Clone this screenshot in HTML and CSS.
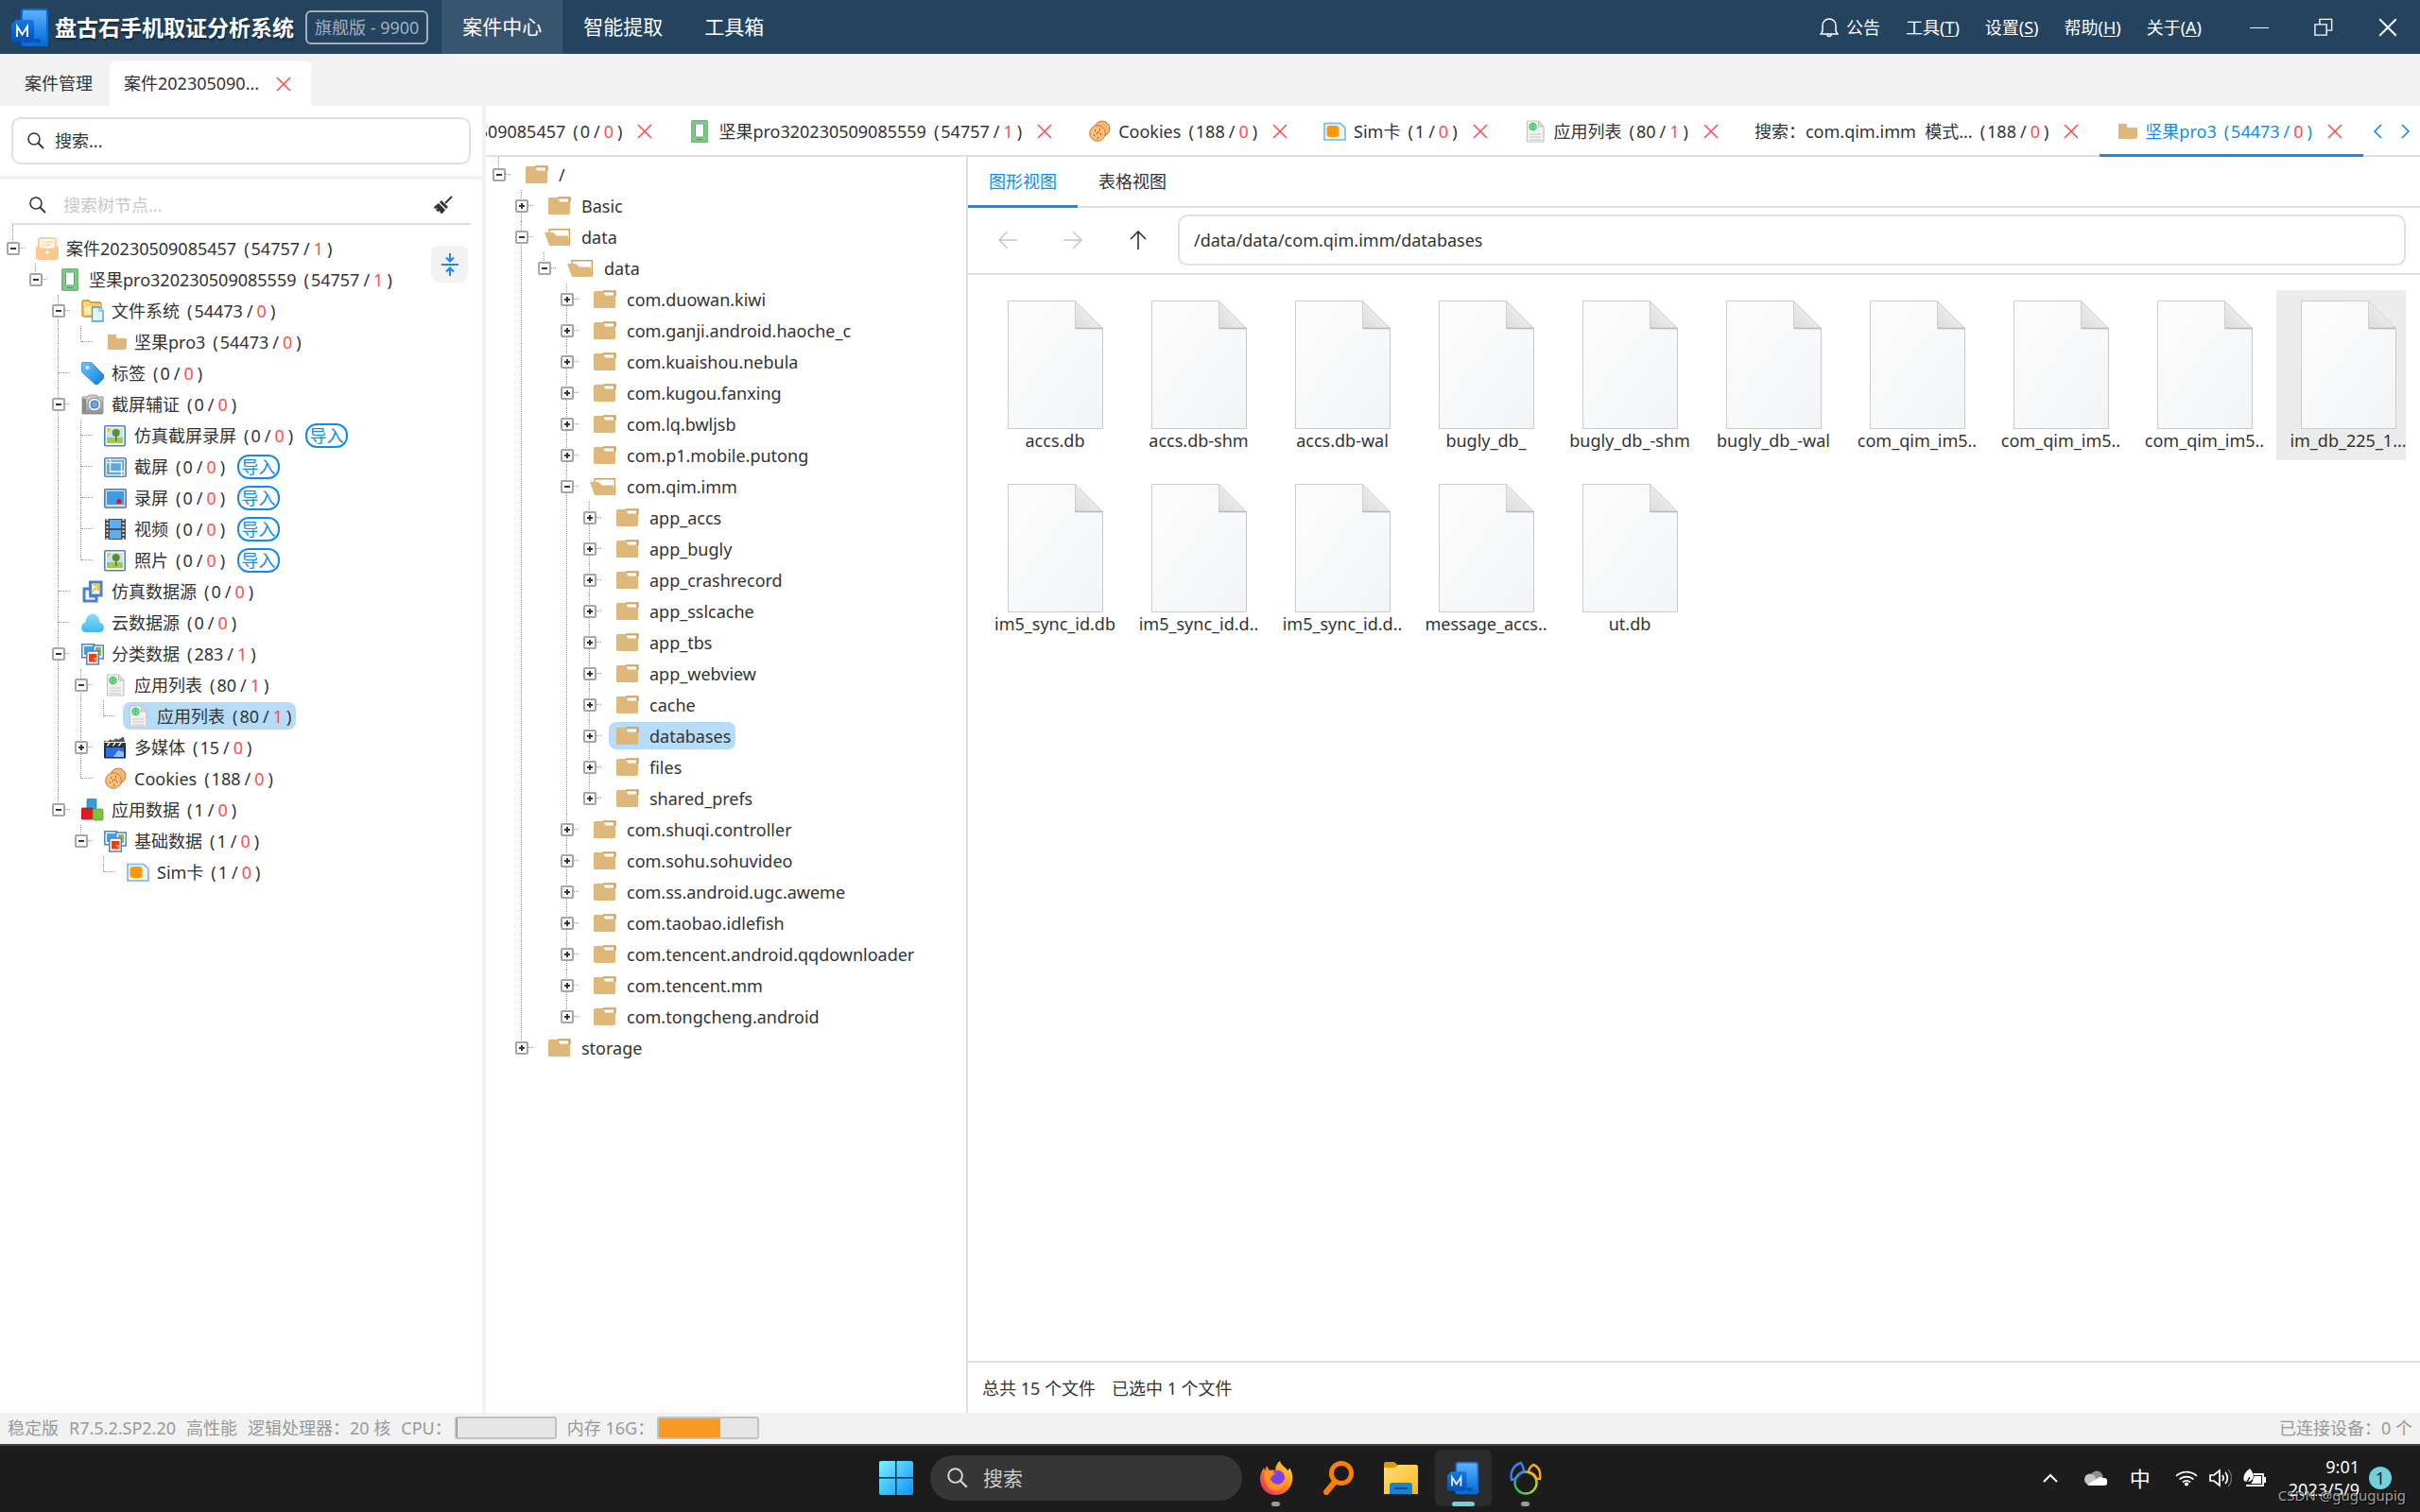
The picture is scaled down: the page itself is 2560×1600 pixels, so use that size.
FILE: index.html
```html
<!DOCTYPE html>
<html lang="zh-CN">
<head>
<meta charset="utf-8">
<title>盘古石手机取证分析系统</title>
<link rel="stylesheet" href="styles.css">
</head>
<body>
<svg class="sprite" aria-hidden="true">
  <defs>
    <linearGradient id="gBlue" x1="0" y1="0" x2="0" y2="1"><stop offset="0" stop-color="#5cb0ff"/><stop offset="1" stop-color="#0a6fd8"/></linearGradient>
    <linearGradient id="gDeep" x1="0" y1="0" x2="0" y2="1"><stop offset="0" stop-color="#1479e6"/><stop offset="1" stop-color="#0050b4"/></linearGradient>
    <linearGradient id="gTag" x1="0" y1="0" x2="1" y2="1"><stop offset="0" stop-color="#6fc6ff"/><stop offset="1" stop-color="#0c7fd8"/></linearGradient>
    <linearGradient id="gCloud" x1="0" y1="0" x2="0" y2="1"><stop offset="0" stop-color="#8fdcfb"/><stop offset="1" stop-color="#3fb8f0"/></linearGradient>
    <linearGradient id="gCam" x1="0" y1="0" x2="0" y2="1"><stop offset="0" stop-color="#d6d6d6"/><stop offset="1" stop-color="#8f8f8f"/></linearGradient>
    <linearGradient id="gPage" x1="0" y1="0" x2="1" y2="1"><stop offset="0" stop-color="#fdfdfd"/><stop offset="1" stop-color="#f2f4f6"/></linearGradient>
    <linearGradient id="gFold" x1="0" y1="1" x2="1" y2="0"><stop offset="0" stop-color="#dcdcdc"/><stop offset="1" stop-color="#f8f8f8"/></linearGradient>
    <linearGradient id="gWin" x1="0" y1="0" x2="1" y2="1"><stop offset="0" stop-color="#7df3ff"/><stop offset="1" stop-color="#0a93ff"/></linearGradient>
    <linearGradient id="gFox" x1="1" y1="0" x2="0" y2="1"><stop offset="0" stop-color="#ffe84a"/><stop offset=".45" stop-color="#ff8a1e"/><stop offset="1" stop-color="#f0147c"/></linearGradient>
    <linearGradient id="gExp" x1="0" y1="0" x2="1" y2="1"><stop offset="0" stop-color="#ffe07a"/><stop offset="1" stop-color="#fbb818"/></linearGradient>
    <linearGradient id="gNav" x1="0" y1="0" x2="1" y2="0"><stop offset="0" stop-color="#20c060"/><stop offset="1" stop-color="#b4d82a"/></linearGradient>
  </defs>
  <symbol id="i-logo" viewBox="0 0 40 42">
    <rect x="10" y="1" width="29" height="40" rx="3" fill="#0a6cd6"/><rect x="12" y="3" width="25" height="34" rx="2" fill="url(#gBlue)"/>
    <rect x="23" y="33" width="8" height="4" rx="1" fill="#0655b0"/>
    <path d="M5 13h16a3 3 0 0 1 3 3v16a5 5 0 0 1-5 5H3a3 3 0 0 1-3-3V18z" fill="url(#gDeep)"/>
    <path d="M6 31V20l5.500 8.500L17 20v11" fill="none" stroke="#fff" stroke-width="2"/>
  </symbol>
  <symbol id="i-bell" viewBox="0 0 20 22"><path d="M10 2a7 7 0 0 1 7 7v6l2 3H1l2-3V9a7 7 0 0 1 7-7zM8 18.500a2 2 0 0 0 4 0" fill="none" stroke="currentColor" stroke-width="1.500"/></symbol>
  <symbol id="i-min" viewBox="0 0 20 20"><path d="M0 10.500h20" stroke="currentColor"/></symbol>
  <symbol id="i-restore" viewBox="0 0 22 22"><path d="M6.500 7V1.500h14v13H15M1 7.500h13.500V20H1z" fill="none" stroke="currentColor" stroke-width="1.500"/></symbol>
  <symbol id="i-x" viewBox="0 0 16 16"><path d="M1 1l14 14M15 1L1 15" fill="none" stroke="currentColor" stroke-width="1.600"/></symbol>
  <symbol id="i-search" viewBox="0 0 18 18"><circle cx="7" cy="7" r="6" fill="none" stroke="currentColor" stroke-width="1.600"/><path d="M11 11l6 6" stroke="currentColor" stroke-width="1.800"/></symbol>
  <symbol id="i-broom" viewBox="0 0 22 20"><path d="M20 1l-7 7" stroke="#333" stroke-width="2"/><path d="M9 5l7 7-2 2-7-7zM6 8l7 7-3 4-3-1 1-2-3 1-2-2 2-2-3 1-1-2z" fill="#333"/></symbol>
  <symbol id="i-collapse" viewBox="0 0 20 26"><path d="M1 13h18M10 1v8M6 5.500l4 4 4-4M10 25v-8M6 20.500l4-4 4 4" fill="none" stroke="#128bf1" stroke-width="2"/></symbol>
  <symbol id="i-case" viewBox="0 0 24 24"><rect x="2" y="0" width="20" height="14" rx="3" fill="#f8cf9c"/><rect x="4" y="2" width="16" height="10" rx="1" fill="#fff8ee"/><path d="M6 5h2M10 5h8M6 8h10" stroke="#f0c48c"/><path d="M0 9c5 4 19 4 24 0v12a3 3 0 0 1-3 3H3a3 3 0 0 1-3-3z" fill="#fbc98b"/><circle cx="12" cy="16" r="2" fill="#fff3e0"/></symbol>
  <symbol id="i-phone" viewBox="0 0 24 24"><rect x="3" y="0" width="18" height="24" rx="1.500" fill="#6fb97a"/><rect x="4.500" y="1.500" width="15" height="21" fill="#80c98a"/><rect x="7.500" y="4" width="9" height="14" rx="1" fill="#fff" stroke="#5da868"/><path d="M9 20.500h6" stroke="#4c9a58"/></symbol>
  <symbol id="i-files" viewBox="0 0 24 24"><path d="M1 3a2 2 0 0 1 2-2h5l2 2h9a2 2 0 0 1 2 2v13H3a2 2 0 0 1-2-2z" fill="#fbd87c" stroke="#c98a22" stroke-width="1.300"/><path d="M2 8l4-2h15v11H3z" fill="#fde9a8" stroke="#e0ab45" stroke-width=".7"/><path d="M11.500 8h8l3.500 4v11H11.500z" fill="#e4f4ff" stroke="#3a9bd9" stroke-width="1.300"/><path d="M19 8v4h4" fill="#fff" stroke="#3a9bd9"/></symbol>
  <symbol id="i-folder" viewBox="0 0 24 24"><path d="M4 4h16a4 4 0 0 1 4 4v9a3 3 0 0 1-3 3H4z" fill="#deb77a"/><path d="M13 4h11v4h-9.500a1.500 1.500 0 0 1-1.500-1.500z" fill="#fff"/></symbol>
  <symbol id="i-dir" viewBox="0 0 28 24"><rect x="4" y="3" width="23" height="18" rx="1.500" fill="#deb77a"/><path d="M14 3h13v5" fill="none" stroke="#cf9f58" stroke-width="1.500"/><path d="M15 4.500h10v3h-9z" fill="#fff"/></symbol>
  <symbol id="i-dir-open" viewBox="0 0 28 24"><path d="M5 9V3.700h21.300V20" fill="#fff" stroke="#cf9f58" stroke-width="1.400"/><path d="M0 7h9l4 3.500h11.500L27 21H5z" fill="#deb77a"/></symbol>
  <symbol id="i-tag" viewBox="0 0 24 24"><path d="M0 3a3 3 0 0 1 3-3h7l14 14v3l-7 7h-2L1 11z" fill="url(#gTag)" stroke="#1a84d4" stroke-width=".8"/><circle cx="6.500" cy="6" r="2" fill="#e8f6ff"/></symbol>
  <symbol id="i-camera" viewBox="0 0 24 24"><path d="M1 4h5l2-2h8l1 2h6v17a1 1 0 0 1-1 1H1z" fill="url(#gCam)" stroke="#858585" stroke-width=".8"/><rect x="1" y="6" width="4" height="14" fill="#8a8a8a"/><circle cx="14" cy="12" r="7" fill="#ececec" stroke="#888"/><circle cx="14" cy="12" r="4" fill="#6ea4ec" stroke="#3c6fba"/></symbol>
  <symbol id="i-photo" viewBox="0 0 24 24"><rect x=".8" y="1.800" width="21.400" height="21" rx="1" fill="#fff" stroke="#4a84b4" stroke-width="1.600"/><rect x="3" y="4" width="17" height="16" fill="#bfe6f8"/><path d="M3 14h17v6H3z" fill="#9acb4a"/><path d="M3 4h4a4 4 0 0 1-4 4z" fill="#fcc01c"/><path d="M12 10h1.500v8H12z" fill="#7a5a2a"/><circle cx="12.700" cy="9" r="4" fill="#5d8f24"/></symbol>
  <symbol id="i-crop" viewBox="0 0 24 24"><rect x=".8" y="2.800" width="22.400" height="19.400" rx="1" fill="#dcecf8" stroke="#5a86aa" stroke-width="1.600"/><rect x="3" y="5" width="18" height="15" fill="#55a8e4"/><path d="M6.500 3v14H22M3 7.500h15.500V22" fill="none" stroke="#fff" stroke-width="1.400"/></symbol>
  <symbol id="i-record" viewBox="0 0 24 24"><rect x=".8" y="2.800" width="22.400" height="19.400" rx="1" fill="#c4dcf0" stroke="#5a7fa0" stroke-width="1.600"/><rect x="3" y="5" width="18" height="14" fill="#3f9be6"/><circle cx="16" cy="15.500" r="2.600" fill="#e01020"/></symbol>
  <symbol id="i-film" viewBox="0 0 24 24"><rect x="1" y="1" width="22" height="22" rx="1" fill="#4d4d50"/><path d="M3.500 1v22M20.500 1v22" stroke="#dcdcdc" stroke-width="2" stroke-dasharray="2 2"/><rect x="6" y="2" width="12" height="9" fill="#5caef0"/><rect x="6" y="13" width="12" height="9" fill="#5caef0"/></symbol>
  <symbol id="i-clone" viewBox="0 0 24 24"><path d="M3 9h7v8h6v5H3z" fill="#fff" stroke="#4c7fd4" stroke-width="3"/><rect x="9.500" y="2" width="11.500" height="14" fill="#fff" stroke="#4c7fd4" stroke-width="3"/><path d="M11 12.500l5-5M12.500 5H18v6" fill="none" stroke="#f8c81c" stroke-width="2.400"/></symbol>
  <symbol id="i-cloud" viewBox="0 0 24 24"><path d="M4.500 22A4.500 4.500 0 0 1 0 17.500C0 14 2 12 4.500 11.500 5 6 8 2.500 12 2.500s7 3.500 7.500 9c2.500.5 4.500 2.500 4.500 6A4.500 4.500 0 0 1 19.500 22z" fill="url(#gCloud)"/></symbol>
  <symbol id="i-class" viewBox="0 0 24 24"><rect x=".8" y="1.800" width="13" height="14" fill="#fff" stroke="#4a84c0" stroke-width="1.500"/><rect x="3" y="4" width="9" height="9" fill="#3fa0f0"/><rect x="12.800" y="3" width="10.500" height="14" fill="#fff" stroke="#4a84c0" stroke-width="1.500"/><path d="M15 5h6v9h-6z" fill="#94b83c"/><rect x="5.800" y="9" width="12.500" height="14" fill="#fff" stroke="#4a84c0" stroke-width="1.500"/><rect x="8" y="12" width="8.500" height="8.500" fill="#e8401c"/><path d="M12 16h4.500v4.500z" fill="#fca040"/></symbol>
  <symbol id="i-doc" viewBox="0 0 24 24"><path d="M3.500 1h12L21 7v16H3.500z" fill="#f2f2f2" stroke="#c4c4c4" stroke-width="1.200"/><path d="M15.500 1v6H21" fill="#d8d8d8" stroke="#c0c0c0"/><circle cx="9.500" cy="7" r="3.500" fill="#b4ecc4" stroke="#3cc864" stroke-width="1.400"/><path d="M9.500 4v6M7 5.500l5 3M12 5.500l-5 3" stroke="#3cc864"/><path d="M6 15h12M6 18h12M6 21h12" stroke="#c8c8c8"/></symbol>
  <symbol id="i-media" viewBox="0 0 24 24"><path d="M0 5L21 1l1 5H0z" fill="#555"/><path d="M2 5l4-2M8 4l4-2M14 3l4-2" stroke="#eee" stroke-width="2"/><rect x="0" y="7" width="23" height="4" fill="#333"/><path d="M3 11l3-4M9 11l3-4M15 11l3-4" stroke="#eee" stroke-width="1.500"/><rect x="0" y="10.500" width="23" height="13" rx="1" fill="#1c2c50"/><rect x="2" y="12" width="19" height="10" fill="#2e6fe0"/><path d="M10 22l5-7 6 2v5z" fill="#8cc4fa"/></symbol>
  <symbol id="i-cookie" viewBox="0 0 24 24"><circle cx="15" cy="9" r="8" fill="#f9b870" stroke="#c47a30"/><circle cx="10" cy="14" r="8.300" fill="#fbbd78" stroke="#c47a30"/><path d="M7 11h1M12 10h1M9 14h1M13 15h1M6 16h1M10 19h1M11 13h1" stroke="#8a4a14" stroke-width="1.500"/></symbol>
  <symbol id="i-blocks" viewBox="0 0 24 24"><rect x="6" y="0" width="10" height="11" rx="1.500" fill="#2ea0dc" stroke="#1880b8" stroke-width=".7"/><rect x="0" y="10" width="12" height="12" rx="1.500" fill="#e01828" stroke="#a80c18" stroke-width=".7"/><rect x="12" y="11" width="11" height="12" rx="1.500" fill="#7cc440" stroke="#4c9020" stroke-width=".7"/></symbol>
  <symbol id="i-sim" viewBox="0 0 24 24"><path d="M1 3.500h17l5 5V21H1z" fill="#eaf6ff" stroke="#7cb4dc" stroke-width="1.600"/><rect x="3.500" y="6" width="13" height="12" rx="3" fill="#fa9c0c"/><path d="M8 6v12M12 6v12M3.500 10h13M3.500 14h13" stroke="#e88a00" stroke-width=".6"/></symbol>
  <symbol id="i-left" viewBox="0 0 20 20"><path d="M20 10H1M10 1l-9 9 9 9" fill="none" stroke="currentColor" stroke-width="1.400"/></symbol>
  <symbol id="i-right" viewBox="0 0 20 20"><path d="M0 10h19M10 1l9 9-9 9" fill="none" stroke="currentColor" stroke-width="1.400"/></symbol>
  <symbol id="i-up" viewBox="0 0 20 20"><path d="M10 20V1M2 9l8-8 8 8" fill="none" stroke="currentColor" stroke-width="1.600"/></symbol>
  <symbol id="i-prev" viewBox="0 0 10 16"><path d="M9 1L2 8l7 7" fill="none" stroke="currentColor" stroke-width="1.600"/></symbol>
  <symbol id="i-next" viewBox="0 0 10 16"><path d="M1 1l7 7-7 7" fill="none" stroke="currentColor" stroke-width="1.600"/></symbol>
  <symbol id="i-page" viewBox="0 0 102 136"><path d="M1.500.500h71l29 29v106H1.500z" fill="url(#gPage)" stroke="#c9cccb"/><path d="M72.500.500v29h29z" fill="url(#gFold)" stroke="#cfcfcf"/><path d="M72.500 29.500h29" stroke="#b9b9b9" stroke-width="1.600"/></symbol>
  <symbol id="i-win" viewBox="0 0 36 36"><path d="M2 0h15v17H0V2a2 2 0 0 1 2-2zM18.500 0H34a2 2 0 0 1 2 2v15H18.500zM0 18.500h17V36H2a2 2 0 0 1-2-2zM18.500 18.500H36V34a2 2 0 0 1-2 2H18.500z" fill="url(#gWin)"/></symbol>
  <symbol id="i-fox" viewBox="0 0 36 36"><path d="M22 0c1 5 6 6 8 10 2-1 2-2 2-3 4 6 4 13 2 18-3 7-9 11-16 11C8 36 1 29 1 19c0-5 2-9 4-12l1 3 2-5 3 5c3-1 5 0 6 0 0-4 2-8 5-10z" fill="url(#gFox)"/><circle cx="19" cy="18" r="8" fill="#7b43e6"/><path d="M6 11c5-2 9 0 12 3-3 0-5 2-6 5 4 8 12 7 15 0 1 10-8 15-15 11-6-4-8-12-6-19z" fill="#ff9a24" opacity=".85"/></symbol>
  <symbol id="i-orange" viewBox="0 0 36 36"><circle cx="21" cy="13" r="10.500" fill="none" stroke="#ff8000" stroke-width="5"/><path d="M14 22L5 33" stroke="#ff8000" stroke-width="6" stroke-linecap="round"/></symbol>
  <symbol id="i-explorer" viewBox="0 0 36 34"><path d="M0 2a2 2 0 0 1 2-2h9l4 4h18v8H0z" fill="#dd9a06"/><path d="M0 6h12l3-3h19a2 2 0 0 1 2 2v29H0z" fill="url(#gExp)"/><path d="M6 34V25a3 3 0 0 1 3-3h18a3 3 0 0 1 3 3v9z" fill="#1682d4"/><path d="M11 28h14" stroke="#0a4f8c" stroke-width="2"/></symbol>
  <symbol id="i-navicat" viewBox="0 0 36 36"><circle cx="18" cy="23" r="11.500" fill="none" stroke="url(#gNav)" stroke-width="2.400"/><path d="M3 20C1 11 6 4 13 2c2 3 3 6 3 9-4 2-6 4-8 7-2 1-3 2-5 2z" fill="none" stroke="#3c7ef8" stroke-width="2.400"/><path d="M33 19c1-7-1-13-7-15-3 2-5 5-5 8 4 1 7 3 8 6 1 1 2 1 4 1z" fill="none" stroke="#fbaa1c" stroke-width="2.400"/></symbol>
  <symbol id="i-chev" viewBox="0 0 16 10"><path d="M1 9l7-7 7 7" fill="none" stroke="#fff" stroke-width="2"/></symbol>
  <symbol id="i-drive" viewBox="0 0 24 16"><circle cx="13" cy="7" r="6.500" fill="#8e8e8e"/><circle cx="6" cy="9.500" r="6" fill="#c4c4c4"/><path d="M3 15l13-8a6 6 0 0 1 4 1 4 4 0 0 1 1 8H5z" fill="#fff"/></symbol>
  <symbol id="i-wifi" viewBox="0 0 24 18"><path d="M1 7a16 16 0 0 1 22 0M4.500 10.500a11 11 0 0 1 15 0M8 13.500a6 6 0 0 1 8 0" fill="none" stroke="#fff" stroke-width="1.700"/><circle cx="12" cy="15.500" r="2" fill="#fff"/></symbol>
  <symbol id="i-sound" viewBox="0 0 24 20"><path d="M1 7h4l6-5v16l-6-5H1z" fill="none" stroke="#fff" stroke-width="1.700"/><path d="M14 7a5 5 0 0 1 0 6M17 4a9 9 0 0 1 0 12" fill="none" stroke="#fff" stroke-width="1.700"/><path d="M20 1a13 13 0 0 1 0 18" fill="none" stroke="#666" stroke-width="1.500"/></symbol>
  <symbol id="i-battery" viewBox="0 0 24 20"><path d="M11 6h10v12H3" fill="none" stroke="#fff" stroke-width="1.800"/><path d="M12 8h7v8H8z" fill="#fff"/><rect x="22" y="9" width="2" height="6" fill="#fff"/><path d="M7 0c3 4 5 7 3 11-2 3-6 4-9 2-2-5 1-9 6-13z" fill="#fff"/><path d="M1 18c2-2 4-5 6-9M10 12l-3 4" stroke="#1c1c1c" stroke-width="1.500" fill="none"/></symbol>
</svg>

<header class="titlebar">
  <svg class="logo"><use href="#i-logo"/></svg>
  <h1>盘古石手机取证分析系统</h1>
  <span class="edition">旗舰版 - 9900</span>
  <nav class="mainnav">
    <a href="#case" class="active">案件中心</a><a href="#extract">智能提取</a><a href="#tools">工具箱</a>
  </nav>
  <div class="menus">
    <button class="notice"><svg><use href="#i-bell"/></svg>公告</button>
    <button>工具(<u>T</u>)</button>
    <button>设置(<u>S</u>)</button>
    <button>帮助(<u>H</u>)</button>
    <button>关于(<u>A</u>)</button>
  </div>
  <div class="window-buttons">
    <button aria-label="最小化"><svg><use href="#i-min"/></svg></button>
    <button aria-label="还原"><svg><use href="#i-restore"/></svg></button>
    <button aria-label="关闭"><svg><use href="#i-x"/></svg></button>
  </div>
</header>

<nav class="casetabs">
  <a href="#manage">案件管理</a>
  <div class="casetab"><a href="#c1">案件202305090...</a><button class="close" aria-label="关闭"><svg><use href="#i-x"/></svg></button></div>
</nav>

<main class="workspace">
  <aside class="sidebar">
    <div class="global-search">
      <label class="searchbox"><svg><use href="#i-search"/></svg><input type="text" aria-label="搜索" placeholder="搜索..."></label>
    </div>
    <div class="tree-search">
      <label><svg><use href="#i-search"/></svg><input type="text" aria-label="搜索树节点" placeholder="搜索树节点..."></label>
      <button aria-label="清除"><svg class="broom"><use href="#i-broom"/></svg></button>
    </div>
    <div class="case-tree">
      <button class="collapse" aria-label="全部折叠"><svg><use href="#i-collapse"/></svg></button>
      <ul class="tree">
        <li><div class="row"><button class="toggle" aria-label="折叠"></button><span class="label"><svg><use href="#i-case"/></svg>案件20230509085457<span class="count"><i>(</i><i>54757</i><i>/</i><b>1</b><i>)</i></span></span></div>
          <ul>
            <li><div class="row"><button class="toggle" aria-label="折叠"></button><span class="label"><svg><use href="#i-phone"/></svg>坚果pro320230509085559<span class="count"><i>(</i><i>54757</i><i>/</i><b>1</b><i>)</i></span></span></div>
              <ul>
                <li><div class="row"><button class="toggle" aria-label="折叠"></button><span class="label"><svg><use href="#i-files"/></svg>文件系统<span class="count"><i>(</i><i>54473</i><i>/</i><b>0</b><i>)</i></span></span></div>
                  <ul>
                    <li><div class="row leaf"><span class="label"><svg><use href="#i-folder"/></svg>坚果pro3<span class="count"><i>(</i><i>54473</i><i>/</i><b>0</b><i>)</i></span></span></div></li>
                  </ul>
                </li>
                <li><div class="row leaf"><span class="label"><svg><use href="#i-tag"/></svg>标签<span class="count"><i>(</i><i>0</i><i>/</i><b>0</b><i>)</i></span></span></div></li>
                <li><div class="row"><button class="toggle" aria-label="折叠"></button><span class="label"><svg><use href="#i-camera"/></svg>截屏辅证<span class="count"><i>(</i><i>0</i><i>/</i><b>0</b><i>)</i></span></span></div>
                  <ul>
                    <li><div class="row leaf"><span class="label"><svg><use href="#i-photo"/></svg>仿真截屏录屏<span class="count"><i>(</i><i>0</i><i>/</i><b>0</b><i>)</i></span></span><button class="import">导入</button></div></li>
                    <li><div class="row leaf"><span class="label"><svg><use href="#i-crop"/></svg>截屏<span class="count"><i>(</i><i>0</i><i>/</i><b>0</b><i>)</i></span></span><button class="import">导入</button></div></li>
                    <li><div class="row leaf"><span class="label"><svg><use href="#i-record"/></svg>录屏<span class="count"><i>(</i><i>0</i><i>/</i><b>0</b><i>)</i></span></span><button class="import">导入</button></div></li>
                    <li><div class="row leaf"><span class="label"><svg><use href="#i-film"/></svg>视频<span class="count"><i>(</i><i>0</i><i>/</i><b>0</b><i>)</i></span></span><button class="import">导入</button></div></li>
                    <li><div class="row leaf"><span class="label"><svg><use href="#i-photo"/></svg>照片<span class="count"><i>(</i><i>0</i><i>/</i><b>0</b><i>)</i></span></span><button class="import">导入</button></div></li>
                  </ul>
                </li>
                <li><div class="row leaf"><span class="label"><svg><use href="#i-clone"/></svg>仿真数据源<span class="count"><i>(</i><i>0</i><i>/</i><b>0</b><i>)</i></span></span></div></li>
                <li><div class="row leaf"><span class="label"><svg><use href="#i-cloud"/></svg>云数据源<span class="count"><i>(</i><i>0</i><i>/</i><b>0</b><i>)</i></span></span></div></li>
                <li><div class="row"><button class="toggle" aria-label="折叠"></button><span class="label"><svg><use href="#i-class"/></svg>分类数据<span class="count"><i>(</i><i>283</i><i>/</i><b>1</b><i>)</i></span></span></div>
                  <ul>
                    <li><div class="row"><button class="toggle" aria-label="折叠"></button><span class="label"><svg><use href="#i-doc"/></svg>应用列表<span class="count"><i>(</i><i>80</i><i>/</i><b>1</b><i>)</i></span></span></div>
                      <ul>
                        <li><div class="row leaf"><span class="label selected"><svg><use href="#i-doc"/></svg>应用列表<span class="count"><i>(</i><i>80</i><i>/</i><b>1</b><i>)</i></span></span></div></li>
                      </ul>
                    </li>
                    <li><div class="row"><button class="toggle plus" aria-label="展开"></button><span class="label"><svg><use href="#i-media"/></svg>多媒体<span class="count"><i>(</i><i>15</i><i>/</i><b>0</b><i>)</i></span></span></div></li>
                    <li><div class="row leaf"><span class="label"><svg><use href="#i-cookie"/></svg>Cookies<span class="count"><i>(</i><i>188</i><i>/</i><b>0</b><i>)</i></span></span></div></li>
                  </ul>
                </li>
                <li><div class="row"><button class="toggle" aria-label="折叠"></button><span class="label"><svg><use href="#i-blocks"/></svg>应用数据<span class="count"><i>(</i><i>1</i><i>/</i><b>0</b><i>)</i></span></span></div>
                  <ul>
                    <li><div class="row"><button class="toggle" aria-label="折叠"></button><span class="label"><svg><use href="#i-class"/></svg>基础数据<span class="count"><i>(</i><i>1</i><i>/</i><b>0</b><i>)</i></span></span></div>
                      <ul>
                        <li><div class="row leaf"><span class="label"><svg><use href="#i-sim"/></svg>Sim卡<span class="count"><i>(</i><i>1</i><i>/</i><b>0</b><i>)</i></span></span></div></li>
                      </ul>
                    </li>
                  </ul>
                </li>
              </ul>
            </li>
          </ul>
        </li>
      </ul>
    </div>
  </aside>

  <section class="content">
    <div class="doctabs">
      <div class="tabstrip">
        <div class="tab"><a href="#t1" class="tablabel"><svg><use href="#i-case"/></svg>案件20230509085457<span class="count"><i>(</i><i>0</i><i>/</i><b>0</b><i>)</i></span></a><button class="close" aria-label="关闭"><svg><use href="#i-x"/></svg></button></div>
        <div class="tab"><a href="#t2" class="tablabel"><svg><use href="#i-phone"/></svg>坚果pro320230509085559<span class="count"><i>(</i><i>54757</i><i>/</i><b>1</b><i>)</i></span></a><button class="close" aria-label="关闭"><svg><use href="#i-x"/></svg></button></div>
        <div class="tab"><a href="#t3" class="tablabel"><svg><use href="#i-cookie"/></svg>Cookies<span class="count"><i>(</i><i>188</i><i>/</i><b>0</b><i>)</i></span></a><button class="close" aria-label="关闭"><svg><use href="#i-x"/></svg></button></div>
        <div class="tab"><a href="#t4" class="tablabel"><svg><use href="#i-sim"/></svg>Sim卡<span class="count"><i>(</i><i>1</i><i>/</i><b>0</b><i>)</i></span></a><button class="close" aria-label="关闭"><svg><use href="#i-x"/></svg></button></div>
        <div class="tab"><a href="#t5" class="tablabel"><svg><use href="#i-doc"/></svg>应用列表<span class="count"><i>(</i><i>80</i><i>/</i><b>1</b><i>)</i></span></a><button class="close" aria-label="关闭"><svg><use href="#i-x"/></svg></button></div>
        <div class="tab"><a href="#t6" class="tablabel">搜索：com.qim.imm&nbsp; 模式...<span class="count"><i>(</i><i>188</i><i>/</i><b>0</b><i>)</i></span></a><button class="close" aria-label="关闭"><svg><use href="#i-x"/></svg></button></div>
        <div class="tab current"><a href="#t7" class="tablabel"><svg><use href="#i-folder"/></svg>坚果pro3<span class="count"><i>(</i><i>54473</i><i>/</i><b>0</b><i>)</i></span></a><button class="close" aria-label="关闭"><svg><use href="#i-x"/></svg></button></div>
      </div>
      <div class="tabscroll"><button aria-label="向左"><svg><use href="#i-prev"/></svg></button><button aria-label="向右"><svg><use href="#i-next"/></svg></button></div>
    </div>

    <div class="split">
      <div class="dirs">
        <ul class="tree">
          <li><div class="row"><button class="toggle" aria-label="折叠"></button><span class="label"><svg><use href="#i-dir"/></svg>/</span></div>
            <ul>
              <li><div class="row"><button class="toggle plus" aria-label="展开"></button><span class="label"><svg><use href="#i-dir"/></svg>Basic</span></div></li>
              <li><div class="row"><button class="toggle" aria-label="折叠"></button><span class="label"><svg><use href="#i-dir-open"/></svg>data</span></div>
                <ul>
                  <li><div class="row"><button class="toggle" aria-label="折叠"></button><span class="label"><svg><use href="#i-dir-open"/></svg>data</span></div>
                    <ul>
                      <li><div class="row"><button class="toggle plus" aria-label="展开"></button><span class="label"><svg><use href="#i-dir"/></svg>com.duowan.kiwi</span></div></li>
                      <li><div class="row"><button class="toggle plus" aria-label="展开"></button><span class="label"><svg><use href="#i-dir"/></svg>com.ganji.android.haoche_c</span></div></li>
                      <li><div class="row"><button class="toggle plus" aria-label="展开"></button><span class="label"><svg><use href="#i-dir"/></svg>com.kuaishou.nebula</span></div></li>
                      <li><div class="row"><button class="toggle plus" aria-label="展开"></button><span class="label"><svg><use href="#i-dir"/></svg>com.kugou.fanxing</span></div></li>
                      <li><div class="row"><button class="toggle plus" aria-label="展开"></button><span class="label"><svg><use href="#i-dir"/></svg>com.lq.bwljsb</span></div></li>
                      <li><div class="row"><button class="toggle plus" aria-label="展开"></button><span class="label"><svg><use href="#i-dir"/></svg>com.p1.mobile.putong</span></div></li>
                      <li><div class="row"><button class="toggle" aria-label="折叠"></button><span class="label"><svg><use href="#i-dir-open"/></svg>com.qim.imm</span></div>
                        <ul>
                          <li><div class="row"><button class="toggle plus" aria-label="展开"></button><span class="label"><svg><use href="#i-dir"/></svg>app_accs</span></div></li>
                          <li><div class="row"><button class="toggle plus" aria-label="展开"></button><span class="label"><svg><use href="#i-dir"/></svg>app_bugly</span></div></li>
                          <li><div class="row"><button class="toggle plus" aria-label="展开"></button><span class="label"><svg><use href="#i-dir"/></svg>app_crashrecord</span></div></li>
                          <li><div class="row"><button class="toggle plus" aria-label="展开"></button><span class="label"><svg><use href="#i-dir"/></svg>app_sslcache</span></div></li>
                          <li><div class="row"><button class="toggle plus" aria-label="展开"></button><span class="label"><svg><use href="#i-dir"/></svg>app_tbs</span></div></li>
                          <li><div class="row"><button class="toggle plus" aria-label="展开"></button><span class="label"><svg><use href="#i-dir"/></svg>app_webview</span></div></li>
                          <li><div class="row"><button class="toggle plus" aria-label="展开"></button><span class="label"><svg><use href="#i-dir"/></svg>cache</span></div></li>
                          <li><div class="row"><button class="toggle plus" aria-label="展开"></button><span class="label selected"><svg><use href="#i-dir"/></svg>databases</span></div></li>
                          <li><div class="row"><button class="toggle plus" aria-label="展开"></button><span class="label"><svg><use href="#i-dir"/></svg>files</span></div></li>
                          <li><div class="row"><button class="toggle plus" aria-label="展开"></button><span class="label"><svg><use href="#i-dir"/></svg>shared_prefs</span></div></li>
                        </ul>
                      </li>
                      <li><div class="row"><button class="toggle plus" aria-label="展开"></button><span class="label"><svg><use href="#i-dir"/></svg>com.shuqi.controller</span></div></li>
                      <li><div class="row"><button class="toggle plus" aria-label="展开"></button><span class="label"><svg><use href="#i-dir"/></svg>com.sohu.sohuvideo</span></div></li>
                      <li><div class="row"><button class="toggle plus" aria-label="展开"></button><span class="label"><svg><use href="#i-dir"/></svg>com.ss.android.ugc.aweme</span></div></li>
                      <li><div class="row"><button class="toggle plus" aria-label="展开"></button><span class="label"><svg><use href="#i-dir"/></svg>com.taobao.idlefish</span></div></li>
                      <li><div class="row"><button class="toggle plus" aria-label="展开"></button><span class="label"><svg><use href="#i-dir"/></svg>com.tencent.android.qqdownloader</span></div></li>
                      <li><div class="row"><button class="toggle plus" aria-label="展开"></button><span class="label"><svg><use href="#i-dir"/></svg>com.tencent.mm</span></div></li>
                      <li><div class="row"><button class="toggle plus" aria-label="展开"></button><span class="label"><svg><use href="#i-dir"/></svg>com.tongcheng.android</span></div></li>
                    </ul>
                  </li>
                </ul>
              </li>
              <li><div class="row"><button class="toggle plus" aria-label="展开"></button><span class="label"><svg><use href="#i-dir"/></svg>storage</span></div></li>
            </ul>
          </li>
        </ul>
      </div>

      <div class="browser">
        <nav class="viewtabs"><a href="#icons" class="active">图形视图</a><a href="#table">表格视图</a></nav>
        <div class="pathbar">
          <button aria-label="后退" disabled><svg><use href="#i-left"/></svg></button>
          <button aria-label="前进" disabled><svg><use href="#i-right"/></svg></button>
          <button aria-label="上级目录"><svg><use href="#i-up"/></svg></button>
          <input type="text" aria-label="路径" value="/data/data/com.qim.imm/databases">
        </div>
        <div class="files">
          <figure><svg><use href="#i-page"/></svg><figcaption>accs.db</figcaption></figure>
          <figure><svg><use href="#i-page"/></svg><figcaption>accs.db-shm</figcaption></figure>
          <figure><svg><use href="#i-page"/></svg><figcaption>accs.db-wal</figcaption></figure>
          <figure><svg><use href="#i-page"/></svg><figcaption>bugly_db_</figcaption></figure>
          <figure><svg><use href="#i-page"/></svg><figcaption>bugly_db_-shm</figcaption></figure>
          <figure><svg><use href="#i-page"/></svg><figcaption>bugly_db_-wal</figcaption></figure>
          <figure><svg><use href="#i-page"/></svg><figcaption>com_qim_im5..</figcaption></figure>
          <figure><svg><use href="#i-page"/></svg><figcaption>com_qim_im5..</figcaption></figure>
          <figure><svg><use href="#i-page"/></svg><figcaption>com_qim_im5..</figcaption></figure>
          <figure class="picked"><svg><use href="#i-page"/></svg><figcaption>im_db_225_1...</figcaption></figure>
          <figure><svg><use href="#i-page"/></svg><figcaption>im5_sync_id.db</figcaption></figure>
          <figure><svg><use href="#i-page"/></svg><figcaption>im5_sync_id.d..</figcaption></figure>
          <figure><svg><use href="#i-page"/></svg><figcaption>im5_sync_id.d..</figcaption></figure>
          <figure><svg><use href="#i-page"/></svg><figcaption>message_accs..</figcaption></figure>
          <figure><svg><use href="#i-page"/></svg><figcaption>ut.db</figcaption></figure>
        </div>
        <div class="summary"><span>总共 15 个文件</span><span>已选中 1 个文件</span></div>
      </div>
    </div>
  </section>
</main>

<footer class="statusbar">
  <span>稳定版</span><span>R7.5.2.SP2.20</span><span>高性能</span><span>逻辑处理器：20 核</span>
  <span class="gauge">CPU：<span class="meter cpu"><span style="width:1%"></span></span></span>
  <span class="gauge">内存 16G：<span class="meter"><span style="width:62%"></span></span></span>
  <span class="devices">已连接设备：0 个</span>
</footer>

<div class="taskbar">
  <div class="apps">
    <button class="app" aria-label="开始"><svg><use href="#i-win"/></svg></button>
    <label class="tasksearch"><svg><use href="#i-search"/></svg><input type="text" aria-label="搜索" placeholder="搜索"></label>
    <button class="app running" aria-label="Firefox"><svg><use href="#i-fox"/></svg></button>
    <button class="app" aria-label="Everything"><svg><use href="#i-orange"/></svg></button>
    <button class="app" aria-label="文件资源管理器"><svg><use href="#i-explorer"/></svg></button>
    <button class="app focused" aria-label="盘古石"><svg><use href="#i-logo"/></svg></button>
    <button class="app running" aria-label="Navicat"><svg><use href="#i-navicat"/></svg></button>
  </div>
  <div class="tray">
    <svg class="chev"><use href="#i-chev"/></svg>
    <svg class="drive"><use href="#i-drive"/></svg>
    <span class="ime">中</span>
    <svg class="status"><use href="#i-wifi"/></svg>
    <svg class="status"><use href="#i-sound"/></svg>
    <svg class="status"><use href="#i-battery"/></svg>
    <div class="clock"><span>9:01</span><span>2023/5/9</span></div>
    <span class="alerts">1</span>
  </div>
  <span class="watermark">CSDN @gugugupig</span>
</div>
</body>
</html>
```
FILE: styles.css
```css
* { box-sizing: border-box; }

body {
  margin: 0;
  min-height: 100vh;
  display: grid;
  grid-template-rows: auto auto 1fr auto auto;
  grid-template-columns: minmax(0, 1fr);
  font: 18px/24px "Noto Sans", "Noto Sans CJK SC", sans-serif;
  color: #333;
  background: #fff;
}

button, input { font: inherit; color: inherit; background: none; border: 0; padding: 0; margin: 0; }
input { outline: 0; min-width: 0; flex: 1; }
a { color: inherit; text-decoration: none; }
ul { list-style: none; margin: 0; padding: 0; }
svg { display: block; flex: none; }
button { display: flex; align-items: center; justify-content: center; white-space: nowrap; }
.sprite { position: absolute; width: 0; height: 0; }

/* title bar */
.titlebar { display: flex; align-items: center; height: 57px; padding-left: 12px; background: #23435f; color: #fff; }
.logo { width: 40px; height: 42px; }
.titlebar h1 { margin: 0 12px 0 6px; font-size: 23px; line-height: 32px; font-weight: 700; text-shadow: 1px 2px 2px rgba(0, 0, 0, .4); white-space: nowrap; }
.edition { height: 36px; padding: 0 8px; border: 2px solid #a3b0bc; border-radius: 6px; line-height: 32px; color: #a3b0bc; white-space: nowrap; }
.mainnav { display: flex; align-self: stretch; margin-left: 14px; font-size: 21px; line-height: 57px; }
.mainnav a { padding: 0 22px; white-space: nowrap; }
.mainnav .active { background: #38556f; }
.menus { display: flex; gap: 27px; margin-left: auto; }
.notice { gap: 8px; }
.notice svg { width: 20px; height: 22px; }
.menus u { text-underline-offset: 2px; }
.window-buttons { display: flex; margin-left: 27px; }
.window-buttons button { width: 68px; height: 57px; }
.window-buttons svg { width: 20px; height: 20px; }

/* open cases */
.casetabs { display: flex; align-items: flex-end; height: 55px; background: #f2f2f2; line-height: 47px; }
.casetabs > a { padding: 0 18px 0 26px; }
.casetab { display: flex; align-items: center; gap: 18px; padding: 0 21px 0 15px; background: #fff; border-radius: 6px 6px 0 0; }
.close { color: #ff4d4f; }
.close svg { width: 16px; height: 16px; }

.workspace { display: grid; grid-template-columns: 514px minmax(0, 1fr); }

/* sidebar */
.sidebar { border-right: 4px solid #f2f2f2; }
.global-search { padding: 12px 12px; border-bottom: 4px solid #f2f2f2; }
.searchbox { display: flex; align-items: center; gap: 11px; height: 50px; padding: 0 15px; border: 2px solid #e0e0e0; border-radius: 10px; }
.searchbox svg, .tree-search label svg { width: 18px; height: 18px; }
.searchbox input::placeholder { color: #333; }
.tree-search { display: flex; align-items: center; height: 48px; margin: 0 12px; padding: 8px 18px 0 19px; border-bottom: 2px solid #e0e0e0; }
.tree-search label { display: flex; align-items: center; gap: 18px; flex: 1; }
.tree-search input::placeholder { color: #c8c8c8; }
.broom { width: 22px; height: 20px; }
.case-tree { position: relative; padding-top: 8px; }
.collapse { position: absolute; right: 15px; top: 22px; width: 39px; height: 39px; border-radius: 8px; background: #f2f2f2; }
.collapse svg { width: 20px; height: 26px; }

/* trees */
.tree ul { padding-left: 24px; }
.tree li { position: relative; }
.tree li::before { content: ""; position: absolute; left: 13px; top: 0; bottom: 0; border-left: 1px dotted #999; }
.tree li:last-child::before { bottom: auto; height: 17px; }
.row { position: relative; display: flex; align-items: center; height: 33px; padding-left: 7px; }
.row::before { content: ""; position: absolute; left: 14px; top: 16px; width: 12px; border-top: 1px dotted #999; }
.tree > li:last-child::before { top: -8px; height: 20px; }
.dirs .tree > li:last-child::before { top: -2px; height: 14px; }
.toggle {
  position: relative; width: 14px; height: 14px; border: 2px solid #a6a6a6; border-radius: 2px;
  background: linear-gradient(#333, #333) center / 6px 2px no-repeat #fff;
}
.toggle.plus { background: linear-gradient(#333, #333) center / 6px 2px no-repeat, linear-gradient(#333, #333) center / 2px 6px no-repeat #fff; }
.label { display: flex; align-items: center; height: 29px; margin-left: 13px; padding: 0 5px 0 4px; border-radius: 8px; white-space: nowrap; }
.leaf .label { margin-left: 27px; }
.label svg { width: 24px; height: 24px; margin-right: 8px; }
.selected { background: #b7dcf8; }
.dirs .label svg { width: 28px; margin-right: 11px; }
.count { display: flex; gap: 4px; margin-left: 8px; }
.count i { font-style: normal; }
.count i:first-child { margin-right: -2px; }
.count b { font-weight: 400; color: #ff4d4f; }
.import { width: 45px; height: 26px; margin-left: 8px; border: 2px solid #128bf1; border-radius: 12px; color: #128bf1; line-height: 22px; }

/* document tabs */
.content { display: flex; flex-direction: column; min-width: 0; }
.doctabs { display: flex; height: 54px; border-bottom: 2px solid #e0e0e0; }
.tabstrip { display: flex; justify-content: flex-end; flex: 1; min-width: 0; overflow: hidden; margin-bottom: -2px; }
.tab { display: flex; align-items: center; gap: 16px; padding: 3px 22px 0 16px; flex: none; border-bottom: 3px solid transparent; }
.tablabel { display: flex; align-items: center; white-space: nowrap; }
.tablabel svg { width: 24px; height: 24px; margin-right: 8px; }
.current { border-bottom-color: #128bf1; color: #128bf1; }
.tabscroll { display: flex; justify-content: space-between; width: 60px; padding: 2px 10px 0; color: #128bf1; }
.tabscroll svg { width: 10px; height: 16px; }

.split { display: grid; grid-template-columns: 510px minmax(0, 1fr); flex: 1; }
.dirs { padding-top: 2px; border-right: 2px solid #e0e0e0; }

/* file browser */
.browser { display: flex; flex-direction: column; min-width: 0; }
.viewtabs { display: flex; height: 54px; border-bottom: 2px solid #e0e0e0; line-height: 53px; }
.viewtabs a { height: 54px; padding: 0 22px; }
.viewtabs .active { color: #128bf1; border-bottom: 3px solid #128bf1; }
.pathbar { display: flex; align-items: center; height: 71px; padding: 0 15px 2px 7px; border-bottom: 2px solid #e0e0e0; }
.pathbar button { width: 69px; }
.pathbar button:disabled { color: #c4c4c4; }
.pathbar svg { width: 20px; height: 20px; }
.pathbar input { height: 54px; margin-left: 8px; padding: 0 15px; border: 2px solid #e0e0e0; border-radius: 10px; }
.files { display: grid; grid-template-columns: repeat(10, 152px); align-content: start; row-gap: 14px; flex: 1; margin-right: 15px; padding: 16px 0 0 16px; overflow: hidden; }
.files figure { display: flex; flex-direction: column; align-items: center; height: 180px; margin: 0; padding-top: 11px; }
.files svg { width: 102px; height: 136px; }
.files figcaption { width: 132px; overflow: hidden; text-align: center; white-space: nowrap; }
.picked { background: #ececec; }
.summary { display: flex; align-items: center; gap: 17px; height: 55px; padding-left: 15px; border-top: 2px solid #e0e0e0; }

/* status bar */
.statusbar { display: flex; align-items: center; gap: 11px; height: 33px; padding: 0 8px 2px; background: #f2f2f2; color: #999; white-space: nowrap; }
.gauge { display: flex; align-items: center; gap: 3px; }
.meter { width: 108px; height: 24px; border: 2px solid #c2c2c2; border-radius: 3px; background: #e6e6e6; }
.meter span { display: block; height: 100%; background: #fa9a22; }
.cpu span { background: #6aa384; }
.devices { margin-left: auto; }

/* taskbar */
.taskbar { position: relative; display: grid; grid-template-columns: 1fr auto 1fr; height: 72px; background: #1c1c1c; border-top: 2px solid #444; color: #fff; }
.apps { grid-column: 2; display: flex; align-items: center; gap: 6px; padding: 0 0 2px 2px; }
.app { position: relative; width: 60px; height: 60px; border-radius: 6px; }
.app svg { width: 36px; height: 36px; }
.tasksearch { display: flex; align-items: center; gap: 16px; width: 330px; height: 48px; padding: 0 18px; border-radius: 24px; background: #363636; color: #d8d8d8; font-size: 21px; }
.tasksearch svg { width: 22px; height: 22px; }
.tasksearch input::placeholder { color: #ccc; }
.running::after, .focused::after { content: ""; position: absolute; bottom: 0; left: 25px; width: 9px; height: 5px; border-radius: 3px; background: #9a9a9a; }
.focused { background: #2b2b2b; }
.focused::after { left: 18px; width: 24px; background: #6fd2da; }
.tray { grid-column: 3; display: flex; align-items: center; justify-content: flex-end; padding: 0 30px 2px 0; }
.chev { width: 16px; height: 10px; margin-right: 28px; }
.drive { width: 24px; height: 16px; margin-right: 24px; }
.ime { margin-right: 26px; font-size: 22px; }
.status { width: 24px; height: 20px; margin-right: 12px; }
.clock { display: flex; flex-direction: column; align-items: flex-end; margin: 0 10px 0 12px; }
.alerts { width: 24px; height: 24px; border-radius: 12px; background: #6fd2da; color: #1c1c1c; text-align: center; }
.watermark { position: absolute; right: 15px; bottom: 6px; font-size: 15px; color: rgba(255, 255, 255, .6); text-shadow: 1px 1px 1px #000; }
```
